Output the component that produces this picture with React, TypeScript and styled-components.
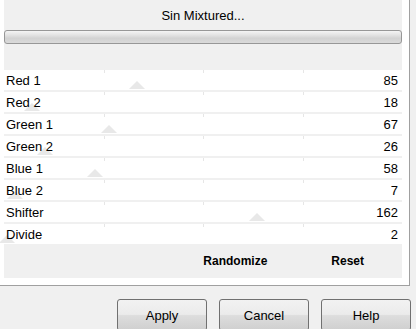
import styled, { createGlobalStyle } from "styled-components";

const GlobalStyle = createGlobalStyle`
  html, body {
    margin: 0;
    padding: 0;
    background: #f0f0f0;
  }
  body {
    font-family: "Liberation Sans", Arial, sans-serif;
    color: #000;
  }
`;

const sliders = [
  { label: "Red 1", value: 85 },
  { label: "Red 2", value: 18 },
  { label: "Green 1", value: 67 },
  { label: "Green 2", value: 26 },
  { label: "Blue 1", value: 58 },
  { label: "Blue 2", value: 7 },
  { label: "Shifter", value: 162 },
  { label: "Divide", value: 2 },
];

export default function App() {
  return (
    <>
      <GlobalStyle />
      <Page>
        <Panel>
          <Inner>
            <Title>Sin Mixtured...</Title>
            <Progress />
            <Rows>
              {sliders.map((s) => (
                <Row key={s.label}>
                  <Tick $pos={25} />
                  <Tick $pos={50} />
                  <Tick $pos={75} />
                  <Thumb style={{ left: `${(s.value / 255) * 100}%` }} />
                  <Label>{s.label}</Label>
                  <Value>{s.value}</Value>
                </Row>
              ))}
            </Rows>
            <ActionBar>
              <TextButton>Randomize</TextButton>
              <TextButton>Reset</TextButton>
            </ActionBar>
          </Inner>
        </Panel>
        <Footer>
          <DialogButton>Apply</DialogButton>
          <DialogButton>Cancel</DialogButton>
          <DialogButton>Help</DialogButton>
        </Footer>
      </Page>
    </>
  );
}

const Page = styled.div`
  width: 416px;
  height: 329px;
  overflow: hidden;
  background: #f0f0f0;
`;

const Panel = styled.div`
  width: 410px;
  height: 286px;
  box-sizing: border-box;
  padding: 0 7px 7px 4px;
  background: #ffffff;
  border-right: 1px solid #a0a0a0;
  border-bottom: 1px solid #a0a0a0;
`;

const Inner = styled.div`
  height: 278px;
  background: #f0f0f0;
  display: flex;
  flex-direction: column;
`;

const Title = styled.div`
  height: 30px;
  line-height: 31px;
  text-align: center;
  font-size: 13px;
`;

const Progress = styled.div`
  height: 14px;
  box-sizing: border-box;
  border: 1px solid #979797;
  border-radius: 3px;
  background: linear-gradient(#f4f4f4 0%, #e2e2e2 35%, #d2d2d2 60%, #dadada 100%);
`;

const Rows = styled.div`
  margin-top: 26px;
  display: flex;
  flex-direction: column;
  gap: 2px;
`;

const Row = styled.div`
  position: relative;
  height: 20px;
  background: #ffffff;
  display: flex;
  align-items: center;
  justify-content: space-between;
  padding: 0 4px 0 2px;
  font-size: 13px;
`;

const Label = styled.span`
  position: relative;
`;

const Value = styled.span`
  position: relative;
`;

const Tick = styled.span<{ $pos: number }>`
  position: absolute;
  top: 0;
  left: ${(p) => p.$pos}%;
  width: 1px;
  height: 3px;
  background: #e6e6e6;
`;

const Thumb = styled.span`
  position: absolute;
  bottom: 1px;
  margin-left: -8px;
  width: 0;
  height: 0;
  border-left: 8px solid transparent;
  border-right: 8px solid transparent;
  border-bottom: 8px solid #e8e8e8;
`;

const ActionBar = styled.div`
  flex: 1;
  display: flex;
  align-items: center;
  justify-content: flex-end;
  gap: 64px;
  padding: 0 38px 0 0;
`;

const TextButton = styled.span`
  font-size: 12px;
  font-weight: bold;
`;

const Footer = styled.div`
  display: flex;
  justify-content: flex-end;
  gap: 12px;
  padding: 13px 5px 0 0;
`;

const DialogButton = styled.button`
  width: 90px;
  height: 32px;
  box-sizing: border-box;
  border: 1px solid #707070;
  border-radius: 3px;
  background: linear-gradient(#f2f2f2 0%, #ebebeb 48%, #dddddd 52%, #cfcfcf 100%);
  font-family: "Liberation Sans", Arial, sans-serif;
  font-size: 13px;
  color: #000;
  padding: 0;
`;
